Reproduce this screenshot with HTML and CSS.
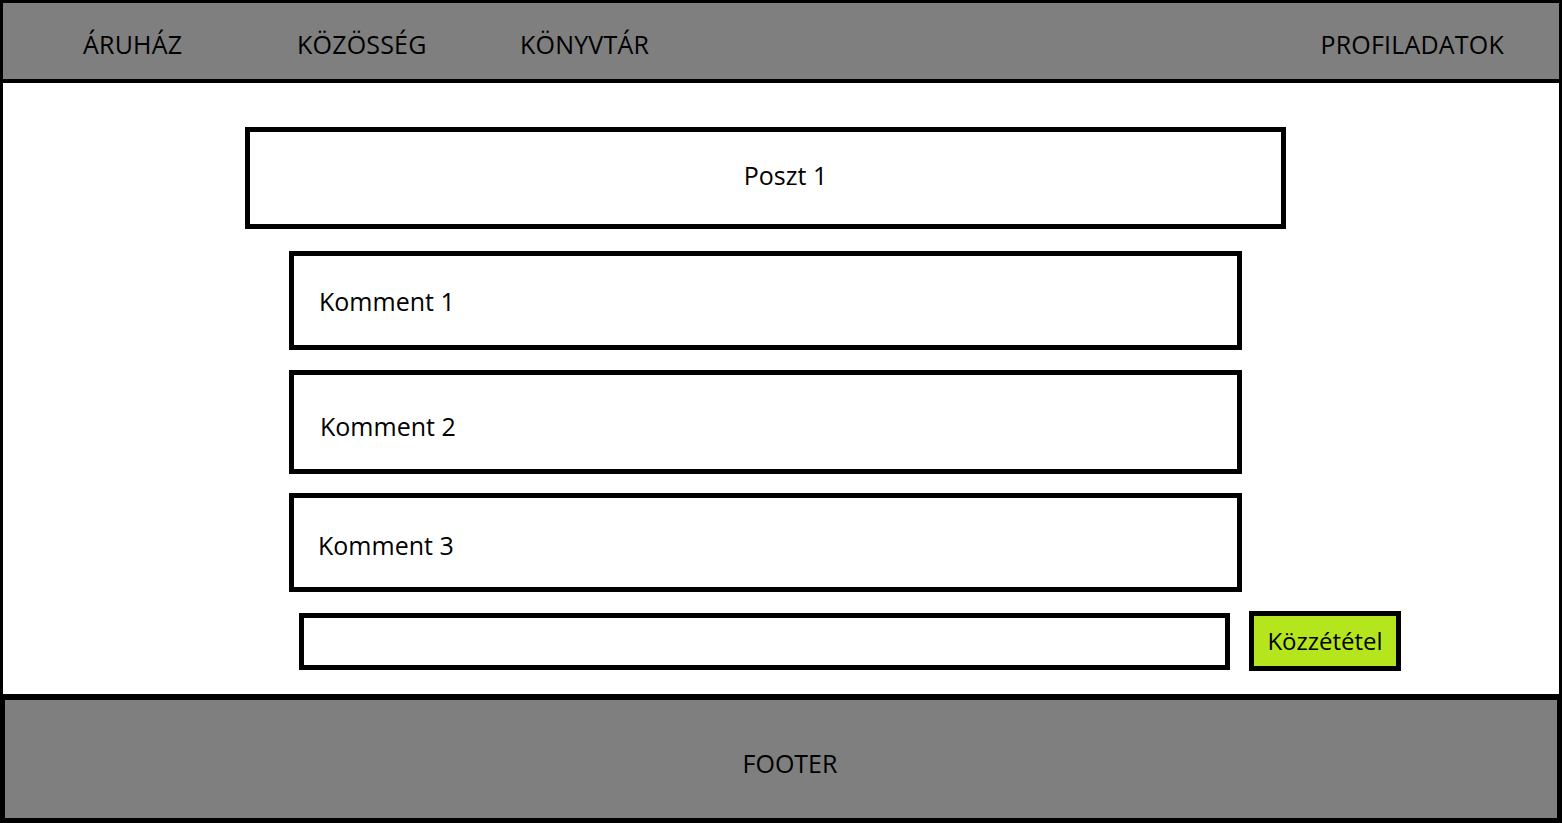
FILE: index.html
```html
<!DOCTYPE html>
<html lang="hu">
<head>
<meta charset="utf-8">
<title>Közösség</title>
<link rel="stylesheet" href="styles.css">
</head>
<body>
<div class="page">
  <header class="topbar">
    <nav class="nav">
      <a class="nav-item nav-store">ÁRUHÁZ</a>
      <a class="nav-item nav-community">KÖZÖSSÉG</a>
      <a class="nav-item nav-library">KÖNYVTÁR</a>
      <a class="nav-item nav-profile">PROFILADATOK</a>
    </nav>
  </header>
  <main class="content">
    <div class="post">Poszt 1</div>
    <div class="comments">
      <div class="comment c1">Komment 1</div>
      <div class="comment c2">Komment 2</div>
      <div class="comment c3">Komment 3</div>
    </div>
    <form class="reply">
      <input class="reply-input" type="text" aria-label="Komment">
      <button class="reply-btn" type="button">Közzététel</button>
    </form>
  </main>
  <footer class="footer">FOOTER</footer>
</div>
</body>
</html>
```

FILE: styles.css
```css
* { box-sizing: border-box; }
html, body { margin: 0; padding: 0; }
body {
  font-family: "Open Sans", "Noto Sans", "Liberation Sans", sans-serif;
  color: #000;
  background: #fff;
}
.page {
  width: 1562px;
  height: 823px;
  display: flex;
  flex-direction: column;
}
.topbar {
  height: 83px;
  background: #7f7f7f;
  border: 3px solid #000;
  border-bottom-width: 4px;
  display: flex;
  align-items: center;
}
.nav {
  display: flex;
  align-items: center;
  width: 100%;
  padding-left: 80px;
  padding-right: 55px;
  padding-top: 7px;
  font-size: 25px;
  line-height: 1;
}
.nav-item { color: #000; text-decoration: none; letter-spacing: 0.2px; }
.nav-store { width: 214px; }
.nav-community { width: 223px; }
.nav-profile { margin-left: auto; }

.content {
  flex: 1;
  border-left: 3px solid #000;
  border-right: 3px solid #000;
  padding-top: 44px;
  padding-left: 242px;
  display: flex;
  flex-direction: column;
  font-size: 25px;
}
.post {
  width: 1041px;
  height: 102px;
  border: 5px solid #000;
  display: flex;
  align-items: center;
  justify-content: center;
  padding-left: 40px;
  padding-bottom: 6px;
}
.comments {
  margin-top: 22px;
  margin-left: 44px;
  display: flex;
  flex-direction: column;
  gap: 20px;
}
.comment {
  width: 953px;
  border: 5px solid #000;
  display: flex;
  align-items: center;
  padding-left: 25px;
}
.c1 { height: 99px; }
.c2 { height: 104px; margin-bottom: -1px; padding-left: 26px; padding-top: 8px; }
.c3 { height: 99px; padding-left: 24px; padding-top: 4px; }
.reply {
  margin: 19px 0 0 54px;
  display: flex;
  align-items: center;
  gap: 19px;
}
.reply-input {
  width: 931px;
  height: 57px;
  border: 5px solid #000;
  background: #fff;
  outline: none;
  font: inherit;
}
.reply-btn {
  width: 152px;
  height: 60px;
  border: 5px solid #000;
  background: #b5e61d;
  font: inherit;
  font-size: 24px;
  color: #000;
  padding: 0 0 2px 0;
}
.footer {
  height: 129px;
  background: #7f7f7f;
  border: 5px solid #000;
  border-top-width: 6px;
  display: flex;
  align-items: center;
  justify-content: center;
  padding-left: 18px;
  padding-top: 8px;
  font-size: 25px;
}
```
